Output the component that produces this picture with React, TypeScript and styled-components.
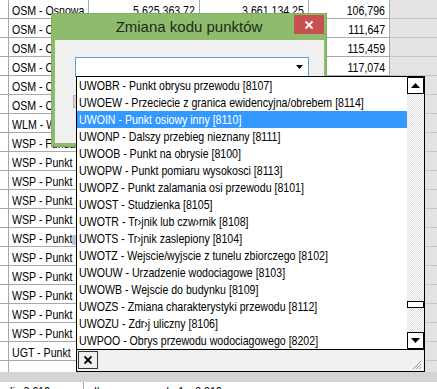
import React from "react";
import styled, { createGlobalStyle } from "styled-components";

const SANS = `"Liberation Sans", Arial, sans-serif`;

const GlobalStyle = createGlobalStyle`
  html, body { margin: 0; padding: 0; background: #fff; }
  body { font-family: ${SANS}; overflow: hidden; }
`;

const Screen = styled.div`
  position: relative;
  width: 437px;
  height: 389px;
  overflow: hidden;
  background: #fff;
  display: flex;
  flex-direction: column;
`;

/* narrow rendering of the legacy UI font */
const Narrow = styled.span<{ $right?: boolean }>`
  display: inline-block;
  white-space: nowrap;
  transform: scaleX(0.815);
  transform-origin: ${(p) => (p.$right ? "right center" : "left center")};
`;

const Sheet = styled.div`
  height: 372px;
  flex: none;
  overflow: hidden;
  display: flex;
  flex-direction: column;
`;

const Row = styled.div`
  display: grid;
  grid-template-columns: 9px 80px 111px 109px 81px 1fr;
  height: 19px;
  flex: none;
`;

const Cell = styled.div<{ $right?: boolean }>`
  position: relative;
  box-sizing: border-box;
  border-right: 1px solid #a8a8a8;
  border-bottom: 1px solid #a8a8a8;
  padding: 4px 4px 0 3px;
  font: 13px/14px ${SANS};
  color: #000;
  white-space: nowrap;
  overflow: hidden;
  text-align: ${(p) => (p.$right ? "right" : "left")};
  background: #fff;
`;

const Filler = styled.div`
  background: #e3e3e3;
  border-bottom: 1px solid #c6c6c6;
`;

const Marker = styled.span`
  position: absolute;
  left: 63px;
  top: 7px;
  width: 4px;
  height: 10px;
  background: #b9c6e3;
`;

const ScrollBand = styled.div`
  height: 10px;
  flex: none;
  background: #d4d4d4;
`;

const Status = styled.div`
  flex: 1;
  display: flex;
  align-items: flex-start;
  background: #fff;
  font: 13px/14px ${SANS};
  color: #000;
  overflow: hidden;
`;

const StatusPart = styled.div<{ $w?: number }>`
  width: ${(p) => (p.$w ? `${p.$w}px` : "auto")};
  flex: ${(p) => (p.$w ? "none" : "1")};
  box-sizing: border-box;
  padding: 3px 0 0 10px;
  border-right: ${(p) => (p.$w ? "1px solid #a8a8a8" : "none")};
  height: 20px;
  white-space: nowrap;
`;

/* ---------- Dialog ---------- */

const Dialog = styled.div`
  position: absolute;
  left: 51px;
  top: 13px;
  width: 276px;
  height: 134px;
  box-sizing: border-box;
  background: #8fbb6c;
  border: 1px solid #82ad60;
  display: flex;
  flex-direction: column;
`;

const TitleBar = styled.div`
  height: 26px;
  flex: none;
  display: grid;
  grid-template-columns: 1fr auto 1fr;
  align-items: start;
`;

const Title = styled.div`
  grid-column: 2;
  font: 15px/26px ${SANS};
  color: #1d2b18;
  white-space: nowrap;
`;

const CloseButton = styled.div`
  grid-column: 3;
  justify-self: end;
  width: 30px;
  height: 19px;
  margin: 1px 2px 0 0;
  background: #c75050;
  display: flex;
  align-items: center;
  justify-content: center;
`;

const DialogBody = styled.div`
  flex: 1;
  margin: 0 2px 3px 3px;
  background: #f0f0f0;
  padding: 17px 0 0 20px;
  display: flex;
  flex-direction: column;
  align-items: flex-start;
`;

const Combo = styled.div`
  width: 234px;
  height: 20px;
  box-sizing: border-box;
  border: 1px solid #5a9fe0;
  background: #fff;
  display: flex;
  align-items: center;
  justify-content: flex-end;
  padding-right: 5px;
`;

const DialogButton = styled.div`
  margin: 18px 0 0 -2px;
  width: 75px;
  height: 13px;
  box-sizing: border-box;
  background: #d6d6d6;
  border: 1px solid #b4b4b4;
`;

/* ---------- Dropdown ---------- */

const Dropdown = styled.div`
  position: absolute;
  left: 76px;
  top: 76px;
  width: 349px;
  height: 296px;
  box-sizing: border-box;
  border: 1px solid #000;
  background: #f0f0f0;
  display: flex;
  flex-direction: column;
`;

const ListArea = styled.div`
  height: 273px;
  flex: none;
  box-sizing: border-box;
  display: flex;
  border-bottom: 1px solid #000;
  background: #fff;
`;

const List = styled.div`
  width: 330px;
  flex: none;
`;

const Item = styled.div<{ $selected?: boolean }>`
  height: 17px;
  padding-left: 2px;
  font: 13px/17px ${SANS};
  white-space: nowrap;
  overflow: hidden;
  background: ${(p) => (p.$selected ? "#3399ff" : "transparent")};
  color: ${(p) => (p.$selected ? "#fff" : "#000")};
`;

const Scrollbar = styled.div`
  position: relative;
  width: 17px;
  flex: none;
  display: flex;
  flex-direction: column;
  justify-content: space-between;
  background-color: #fff;
  background-image: repeating-conic-gradient(#dcdcdc 0 25%, #fff 0 50%);
  background-size: 2px 2px;
`;

const ScrollButton = styled.div`
  height: 17px;
  box-sizing: border-box;
  border: 1px solid #000;
  background: #fff;
  display: flex;
  align-items: center;
  justify-content: center;
`;

const Thumb = styled.div`
  position: absolute;
  left: 0;
  right: 0;
  height: 7px;
  box-sizing: border-box;
  border: 1px solid #000;
  background: #fff;
`;

const Footer = styled.div`
  flex: 1;
  display: flex;
  align-items: flex-start;
  justify-content: space-between;
  padding: 1px;
`;

const SmallClose = styled.div`
  width: 20px;
  height: 18px;
  box-sizing: border-box;
  border: 1px solid #333;
  background: #f0f0f0;
  display: flex;
  align-items: center;
  justify-content: center;
`;

const Grip = styled.svg`
  align-self: flex-end;
  margin: 0 1px 0 0;
`;

const rows: string[][] = [
  ["OSM - Osnowa", "5.625.363,72", "3.661.134,25", "106,796"],
  ["OSM - Osnowa", "5.625.371,40", "3.661.140,11", "111,647"],
  ["OSM - Osnowa", "5.625.380,02", "3.661.151,86", "115,459"],
  ["OSM - Osnowa", "5.625.392,55", "3.661.160,30", "117,074"],
  ["OSM - Osnowa", "5.625.401,19", "3.661.172,64", "118,210"],
  ["OSM - Osnowa", "5.625.412,83", "3.661.180,05", "119,532"],
  ["WLM - Wodomierz", "5.625.420,17", "3.661.191,48", "120,004"],
  ["WSP - Fundament", "5.625.431,66", "3.661.200,93", "120,871"],
  ["WSP - Punkt pomiaru", "5.625.440,08", "3.661.212,37", "121,340"],
  ["WSP - Punkt pomiaru", "5.625.452,71", "3.661.220,80", "121,902"],
  ["WSP - Punkt pomiaru", "5.625.461,35", "3.661.231,12", "122,418"],
  ["WSP - Punkt pomiaru", "5.625.470,94", "3.661.240,69", "122,977"],
  ["WSP - Punkt pomiaru", "5.625.482,26", "3.661.252,04", "123,501"],
  ["WSP - Punkt pomiaru", "5.625.490,53", "3.661.260,47", "124,066"],
  ["WSP - Punkt pomiaru", "5.625.501,88", "3.661.271,91", "124,610"],
  ["WSP - Punkt pomiaru", "5.625.512,20", "3.661.280,35", "125,133"],
  ["WSP - Punkt pomiaru", "5.625.520,67", "3.661.291,78", "125,702"],
  ["WSP - Punkt pomiaru", "5.625.531,09", "3.661.300,16", "126,245"],
  ["UGT - Punkt", "5.625.540,44", "3.661.311,59", "126,790"],
  ["", "", "", ""],
];

const items = [
  "UWOBR - Punkt obrysu przewodu [8107]",
  "UWOEW - Przeciecie z granica ewidencyjna/obrebem [8114]",
  "UWOIN - Punkt osiowy inny [8110]",
  "UWONP - Dalszy przebieg nieznany [8111]",
  "UWOOB - Punkt na obrysie [8100]",
  "UWOPW - Punkt pomiaru wysokosci [8113]",
  "UWOPZ - Punkt zalamania osi przewodu [8101]",
  "UWOST - Studzienka [8105]",
  "UWOTR - Tr›jnik lub czw›rnik [8108]",
  "UWOTS - Tr›jnik zaslepiony [8104]",
  "UWOTZ - Wejscie/wyjscie z tunelu zbiorczego [8102]",
  "UWOUW - Urzadzenie wodociagowe [8103]",
  "UWOWB - Wejscie do budynku [8109]",
  "UWOZS - Zmiana charakterystyki przewodu [8112]",
  "UWOZU - Zdr›j uliczny [8106]",
  "UWPOO - Obrys przewodu wodociagowego [8202]",
];

const thumbTop = 224;

export default function App() {
  return (
    <>
      <GlobalStyle />
      <Screen>
        <Sheet>
          {rows.map((r, i) => (
            <Row key={i}>
              <Cell />
              <Cell>
                <Narrow>{r[0]}</Narrow>
                {i === 12 && <Marker />}
              </Cell>
              <Cell $right>
                <Narrow $right>{r[1]}</Narrow>
              </Cell>
              <Cell $right>
                <Narrow $right>{r[2]}</Narrow>
              </Cell>
              <Cell $right>
                <Narrow $right>{r[3]}</Narrow>
              </Cell>
              <Filler />
            </Row>
          ))}
        </Sheet>
        <ScrollBand />
        <Status>
          <StatusPart $w={84}>
            <Narrow>lin 3.219</Narrow>
          </StatusPart>
          <StatusPart>
            <Narrow>Il. zaznaczonych: 1 z 3.219</Narrow>
          </StatusPart>
        </Status>

        <Dialog>
          <TitleBar>
            <Title>Zmiana kodu punktów</Title>
            <CloseButton>
              <svg width="10" height="10" viewBox="0 0 10 10">
                <path d="M1.5 1.5 L8.5 8.5 M8.5 1.5 L1.5 8.5" stroke="#fff" strokeWidth="1.8" />
              </svg>
            </CloseButton>
          </TitleBar>
          <DialogBody>
            <Combo>
              <svg width="7" height="4" viewBox="0 0 7 4">
                <path d="M0 0 H7 L3.5 4 Z" fill="#000" />
              </svg>
            </Combo>
            <DialogButton />
          </DialogBody>
        </Dialog>

        <Dropdown>
          <ListArea>
            <List>
              {items.map((t, i) => (
                <Item key={t} $selected={i === 2}>
                  <Narrow>{t}</Narrow>
                </Item>
              ))}
            </List>
            <Scrollbar>
              <ScrollButton>
                <svg width="9" height="5" viewBox="0 0 9 5">
                  <path d="M0 5 H9 L4.5 0 Z" fill="#000" />
                </svg>
              </ScrollButton>
              <Thumb style={{ top: thumbTop }} />
              <ScrollButton>
                <svg width="9" height="5" viewBox="0 0 9 5">
                  <path d="M0 0 H9 L4.5 5 Z" fill="#000" />
                </svg>
              </ScrollButton>
            </Scrollbar>
          </ListArea>
          <Footer>
            <SmallClose>
              <svg width="10" height="10" viewBox="0 0 10 10">
                <path d="M1.5 1.5 L8.5 8.5 M8.5 1.5 L1.5 8.5" stroke="#000" strokeWidth="1.8" />
              </svg>
            </SmallClose>
            <Grip width="12" height="12" viewBox="0 0 12 12">
              <path d="M11 3 L3 11 M11 6 L6 11 M11 9 L9 11" stroke="#a0a0a0" strokeWidth="1" />
            </Grip>
          </Footer>
        </Dropdown>
      </Screen>
    </>
  );
}
